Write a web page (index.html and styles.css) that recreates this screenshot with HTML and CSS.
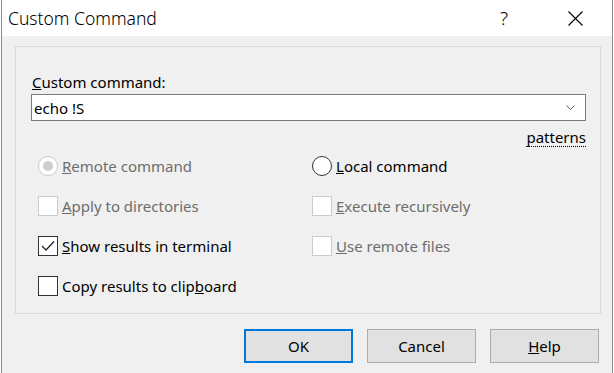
FILE: index.html
```html
<!DOCTYPE html>
<html lang="en">
<head>
  <meta charset="UTF-8">
  <title>Custom Command</title>
  <link rel="stylesheet" href="styles.css">
</head>
<body>
  <div class="window">
    <div class="titlebar">
      <span class="title">Custom Command</span>
      <span class="caption-btn help-btn">?</span>
      <span class="caption-btn close-btn">
        <svg width="15" height="15" viewBox="0 0 15 15">
          <path d="M0.5 0.5 L14.5 14.5 M14.5 0.5 L0.5 14.5" stroke="#000" stroke-width="1.1" fill="none"/>
        </svg>
      </span>
    </div>

    <div class="content">
      <div class="panel">
        <div class="field-label"><u>C</u>ustom command:</div>
        <div class="combo">
          <span class="combo-text">echo !S</span>
          <svg class="chevron" width="9" height="5" viewBox="0 0 9 5">
            <path d="M0.5 0.5 L4.5 4.5 L8.5 0.5" stroke="#606060" stroke-width="1" fill="none"/>
          </svg>
        </div>
        <div class="patterns-row">
          <span class="link">patterns</span>
        </div>

        <div class="options">
          <label class="opt disabled">
            <span class="radio"><span class="dot"></span></span>
            <span><u>R</u>emote command</span>
          </label>
          <label class="opt">
            <span class="radio"></span>
            <span><u>L</u>ocal command</span>
          </label>

          <label class="opt disabled">
            <span class="check"></span>
            <span><u>A</u>pply to directories</span>
          </label>
          <label class="opt disabled">
            <span class="check"></span>
            <span><u>E</u>xecute recursively</span>
          </label>

          <label class="opt">
            <span class="check">
              <svg width="14" height="12" viewBox="0 0 14 12">
                <path d="M1 6 L5 10 L13 1.5" stroke="#222" stroke-width="1.3" fill="none"/>
              </svg>
            </span>
            <span><u>S</u>how results in terminal</span>
          </label>
          <label class="opt disabled">
            <span class="check"></span>
            <span><u>U</u>se remote files</span>
          </label>

          <label class="opt">
            <span class="check"></span>
            <span>Copy results to clip<u>b</u>oard</span>
          </label>
        </div>
      </div>

      <div class="buttons">
        <button class="btn default">OK</button>
        <button class="btn">Cancel</button>
        <button class="btn"><u>H</u>elp</button>
      </div>
    </div>
  </div>
</body>
</html>
```

FILE: styles.css
```css
body {
  margin: 0;
  background: #fff;
  font-family: "Noto Sans", "Open Sans", sans-serif;
  font-size: 15px;
  color: #000;
}

.window {
  box-sizing: border-box;
  width: 612px;
  height: 373px;
  margin-left: 1px;
  border-left: 1px solid #8a8a8a;
  border-right: 1px solid #8a8a8a;
  background: #f0f0f0;
}

.titlebar {
  display: flex;
  align-items: center;
  height: 36px;
  background: #fff;
}

.title {
  flex: 1;
  padding-left: 6px;
  font-size: 17.5px;
  font-weight: 300;
}

.caption-btn {
  display: flex;
  justify-content: center;
  align-items: center;
  height: 36px;
}

.help-btn {
  width: 20px;
  margin-right: 54px;
  font-size: 19px;
  font-weight: 300;
}

.close-btn {
  width: 15px;
  margin-right: 29px;
}

.content {
  padding: 10px 11px 0 13px;
}

.panel {
  box-sizing: border-box;
  height: 268px;
  border: 1px solid #dcdcdc;
  padding: 25px 14px 0 15px;
}

.field-label {
  height: 20px;
  line-height: 20px;
  padding-left: 1px;
  margin-bottom: 2px;
}

.combo {
  box-sizing: border-box;
  display: flex;
  align-items: center;
  height: 27px;
  border: 1px solid #7a7a7a;
  background: #fff;
  padding: 0 10px 0 2px;
}

.combo-text {
  flex: 1;
}

.patterns-row {
  display: flex;
  justify-content: flex-end;
  margin-top: 8px;
  height: 20px;
  line-height: 20px;
}

.link {
  border-bottom: 1px dotted #000;
  line-height: 17px;
  height: 17px;
}

.options {
  display: grid;
  grid-template-columns: 274px 1fr;
  row-gap: 20px;
  margin: 7px 0 0 7px;
}

.opt {
  display: flex;
  align-items: center;
  gap: 4px;
  height: 20px;
}

.opt.disabled {
  color: #6d6d6d;
}

.radio {
  box-sizing: border-box;
  display: flex;
  justify-content: center;
  align-items: center;
  width: 20px;
  height: 20px;
  border: 1px solid #333;
  border-radius: 50%;
  background: #fff;
}

.disabled .radio {
  border-color: #cccccc;
}

.dot {
  width: 10px;
  height: 10px;
  border-radius: 50%;
  background: #cccccc;
}

.check {
  box-sizing: border-box;
  display: flex;
  justify-content: center;
  align-items: center;
  width: 20px;
  height: 20px;
  border: 1px solid #333;
  background: #fff;
}

.disabled .check {
  border-color: #cccccc;
}

.buttons {
  display: flex;
  justify-content: flex-end;
  gap: 14px;
  margin-top: 15px;
  padding-right: 2px;
}

.btn {
  box-sizing: border-box;
  width: 109px;
  height: 34px;
  border: 1px solid #adadad;
  background: #e1e1e1;
  font-family: inherit;
  font-size: 15px;
  color: #000;
  padding: 0;
}

.btn.default {
  border: 2px solid #0078d7;
}
```
